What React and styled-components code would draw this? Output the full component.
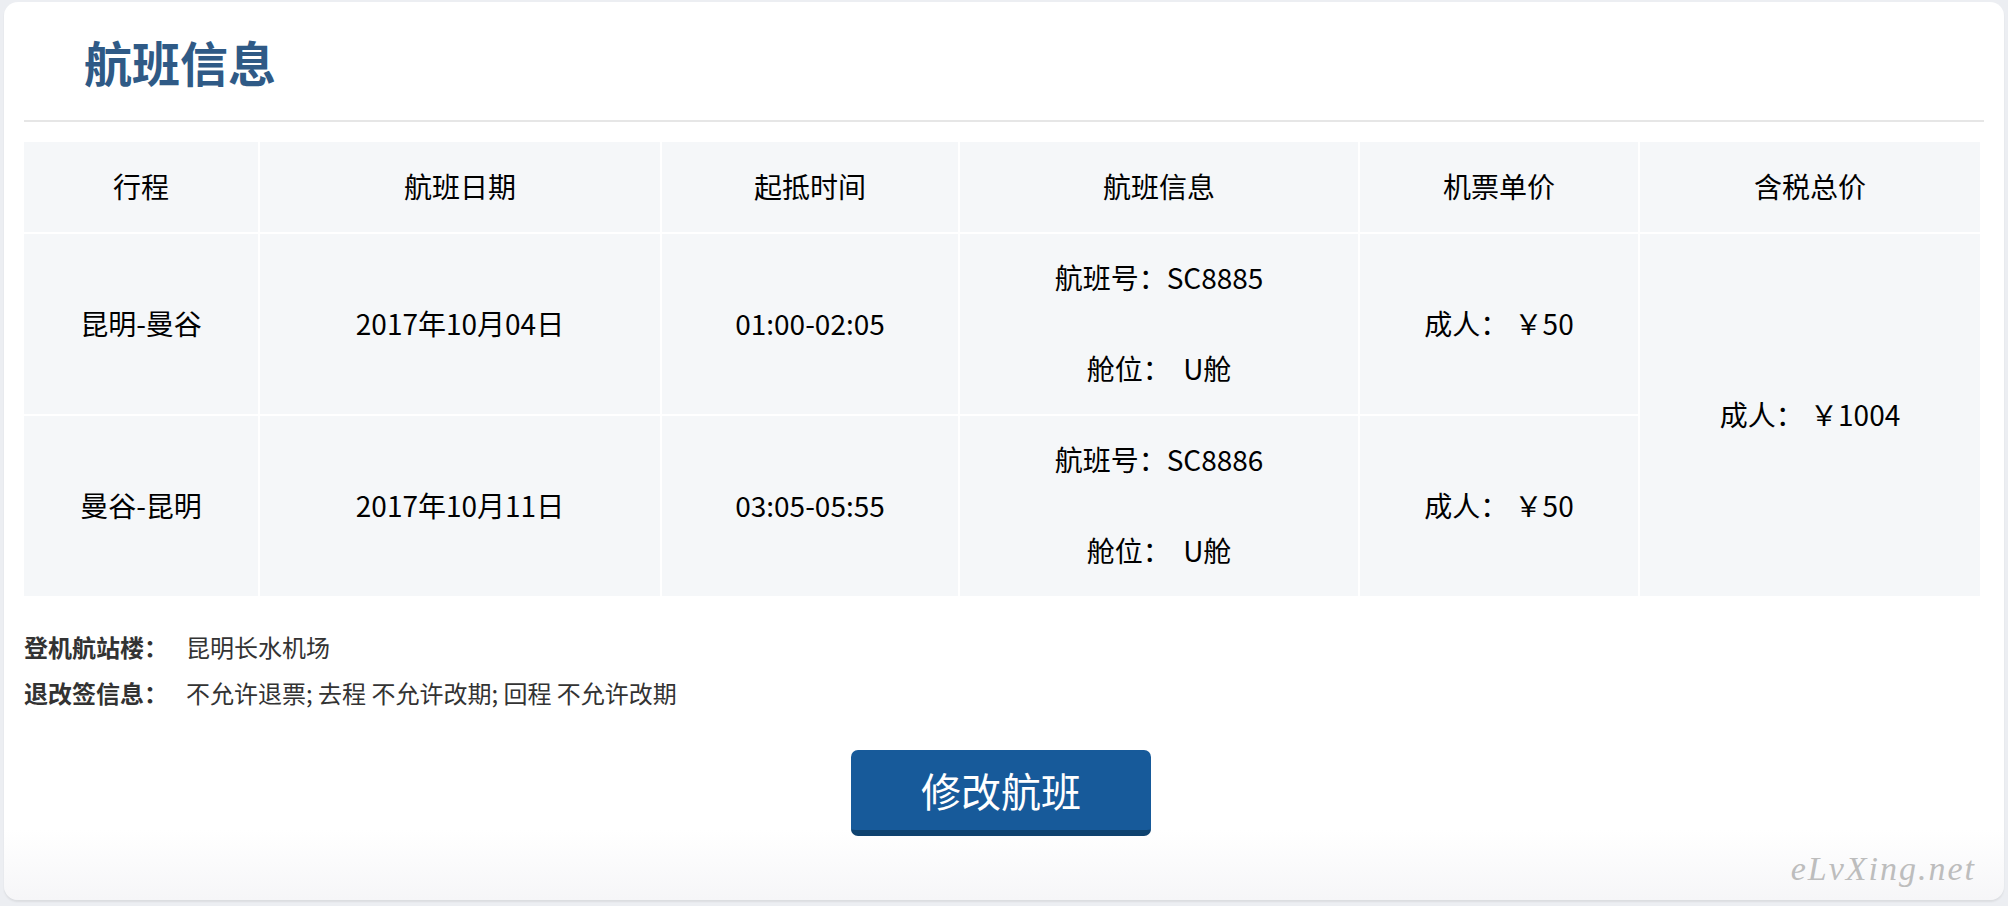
import React from "react";
import styled, { createGlobalStyle } from "styled-components";

const GlobalStyle = createGlobalStyle`
  html, body {
    margin: 0;
    padding: 0;
    background: #eceef2;
  }
  body {
    font-family: "Noto Sans CJK SC", "Noto Sans", sans-serif;
    color: #111;
  }
`;

const Page = styled.div`
  padding: 2px 4px 6px 4px;
`;

const Card = styled.div`
  position: relative;
  box-sizing: border-box;
  width: 2000px;
  height: 898px;
  padding: 0 20px;
  background: linear-gradient(to bottom, #ffffff calc(100% - 70px), #f6f6f8 100%);
  border-radius: 14px;
  box-shadow: 0 2px 2px rgba(0, 0, 0, 0.07);
`;

const Header = styled.div`
  height: 118px;
  display: flex;
  align-items: center;
  padding-left: 60px;
  border-bottom: 2px solid #e6e6e6;
`;

const Title = styled.h1`
  margin: 0;
  font-size: 48px;
  font-weight: 700;
  color: #2f5a86;
`;

const Table = styled.div`
  margin-top: 20px;
  width: 1956px;
  display: grid;
  grid-template-columns: 234px 400px 296px 398px 278px 340px;
  grid-template-rows: 90px 180px 180px;
  gap: 2px;
  background: #ffffff;
`;

const Cell = styled.div`
  background: #f5f7f9;
  display: flex;
  flex-direction: column;
  align-items: center;
  justify-content: center;
  gap: 51px;
  font-size: 28px;
  line-height: 40px;
  color: #000;
  padding-bottom: 3px;
  grid-row: ${({ span }) => (span ? `span ${span}` : "auto")};
`;

const Line = styled.div`
  white-space: pre;
`;

const Info = styled.div`
  margin-top: 28px;
  font-size: 24px;
  line-height: 46px;
  color: #333;
`;

const InfoRow = styled.div`
  display: flex;
`;

const Label = styled.span`
  font-weight: 700;
  margin-right: 18px;
`;

const Actions = styled.div`
  display: flex;
  justify-content: center;
  margin-top: 34px;
  padding-right: 6px;
`;

const Button = styled.button`
  box-sizing: border-box;
  width: 300px;
  height: 86px;
  border: none;
  border-bottom: 6px solid #0e426f;
  border-radius: 7px;
  background: #175a9a;
  color: #fff;
  font-family: "Noto Sans CJK SC", sans-serif;
  font-size: 40px;
  cursor: pointer;
`;

const Watermark = styled.span`
  position: absolute;
  right: 28px;
  bottom: 12px;
  font-family: "Liberation Serif", serif;
  font-style: italic;
  font-size: 34px;
  letter-spacing: 2px;
  color: #bdbdbd;
`;

const heads = ["行程", "航班日期", "起抵时间", "航班信息", "机票单价", "含税总价"];

const legs = [
  { route: "昆明-曼谷", date: "2017年10月04日", time: "01:00-02:05", no: "SC8885", cabin: "U舱", price: "50" },
  { route: "曼谷-昆明", date: "2017年10月11日", time: "03:05-05:55", no: "SC8886", cabin: "U舱", price: "50" },
];

export default function App() {
  return (
    <>
      <GlobalStyle />
      <Page>
        <Card>
          <Header>
            <Title>航班信息</Title>
          </Header>
          <Table>
            {heads.map((h) => (
              <Cell key={h}>{h}</Cell>
            ))}
            {legs.map((leg, i) => (
              <React.Fragment key={leg.no}>
                <Cell>{leg.route}</Cell>
                <Cell>{leg.date}</Cell>
                <Cell>{leg.time}</Cell>
                <Cell>
                  <Line>航班号：{leg.no}</Line>
                  <Line>舱位：  {leg.cabin}</Line>
                </Cell>
                <Cell>成人：  ￥{leg.price}</Cell>
                {i === 0 && <Cell span={2}>成人：  ￥1004</Cell>}
              </React.Fragment>
            ))}
          </Table>
          <Info>
            <InfoRow>
              <Label>登机航站楼：</Label>
              <span>昆明长水机场</span>
            </InfoRow>
            <InfoRow>
              <Label>退改签信息：</Label>
              <span>不允许退票; 去程 不允许改期; 回程 不允许改期</span>
            </InfoRow>
          </Info>
          <Actions>
            <Button>修改航班</Button>
          </Actions>
          <Watermark>eLvXing.net</Watermark>
        </Card>
      </Page>
    </>
  );
}
